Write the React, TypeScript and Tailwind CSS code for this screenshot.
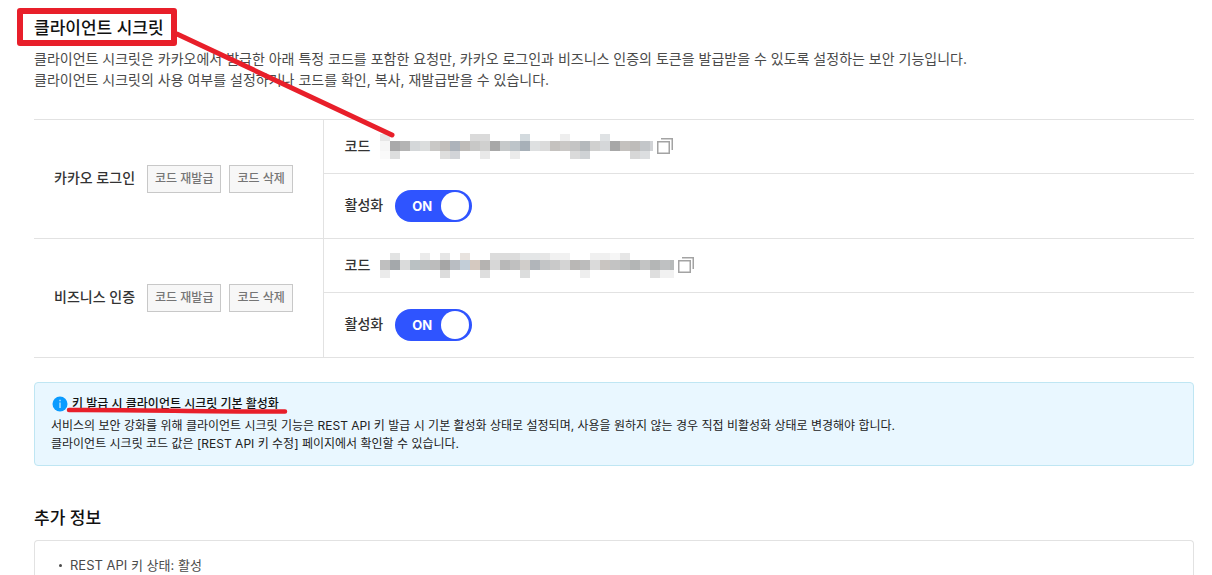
const rows = [
  {
    name: '카카오 로그인',
    width: 273,
    // [column, span, color] on a 10px grid
    upper: [[0, 1, '#e6e6e6'], [9, 2, '#dadada'], [14, 1, '#d3dade'], [18, 1, '#eeeeee'], [22, 1, '#dfe2e4']],
    middle: ['#f6f6f6', '#a9a9aa', '#b4b4b4', '#d4d7d9', '#dbdddd', '#c9c8c6', '#c2bfbc', '#adb3bb', '#bfbcb9', '#c8c8c7', '#d0d0cf', '#a8a8a8', '#c6c9ca', '#bdc4c9', '#a7b0b8', '#dee0e1', '#dbdbdb', '#c5c2bf', '#cac8c6', '#c4c4c4', '#b5b9bc', '#d0d0cf', '#d5d7d9', '#a7a7a7', '#c4c1be', '#bebcba', '#c3c6c9', '#d1d3d6'],
    lower: [[0, 1, '#fafafa'], [1, 1, '#dddede'], [6, 1, '#dededd'], [7, 1, '#d2d4d8'], [10, 1, '#e9e9e9'], [13, 1, '#ebebeb'], [19, 1, '#dadada'], [20, 1, '#cfd2d5'], [25, 1, '#d7d7d7'], [26, 1, '#dcdee0']],
  },
  {
    name: '비즈니스 인증',
    width: 294,
    upper: [[1, 1, '#e2e3e3'], [4, 1, '#ebebeb'], [6, 1, '#e6e6e6'], [8, 1, '#e8e3df'], [11, 3, '#dcdcdc'], [14, 2, '#e4e6e7'], [16, 1, '#e6e6e6'], [17, 2, '#f1f1f1'], [21, 2, '#f0f0f0'], [23, 1, '#f6f6f6'], [24, 1, '#e6e6e6']],
    middle: ['#bfbfbf', '#a4a8ab', '#dadbdb', '#bac1c3', '#bcbfc0', '#bcbcbc', '#a6a6a6', '#b9bdc2', '#c3ced8', '#d5c9c0', '#b5b3b1', '#d7d7d7', '#b8b8b8', '#c0c0c0', '#d0cdca', '#b1b5ba', '#c3c5c6', '#c9c9c9', '#d4d4d4', '#b9b7b5', '#bcbcbc', '#dadada', '#c9c5c1', '#c3c3c3', '#bcbebe', '#b3b5b5', '#c3c4c4', '#b4b6b6', '#bfc1c2', '#b7baba'],
    lower: [[0, 1, '#ebebeb'], [6, 1, '#dcdcdc'], [10, 1, '#dedede'], [14, 1, '#dcdddd'], [20, 1, '#eeeeee'], [27, 1, '#dedede'], [28, 2, '#f1f1f1']],
  },
];

type Row = (typeof rows)[number];

function MaskedCode({ row }: { row: Row }) {
  return (
    <svg width={row.width} height="26" shapeRendering="crispEdges" aria-hidden="true">
      {row.upper.map(([x, span, fill]) => (
        <rect key={x} x={Number(x) * 10} y="0" width={Number(span) * 10} height="7" fill={String(fill)} />
      ))}
      {row.middle.map((fill, i) => (
        <rect key={i} x={i * 10} y="7" width="10" height="10" fill={fill} />
      ))}
      {row.lower.map(([x, span, fill]) => (
        <rect key={x} x={Number(x) * 10} y="17" width={Number(span) * 10} height="8" fill={String(fill)} />
      ))}
    </svg>
  );
}

function CopyIcon() {
  return (
    <svg width="16" height="16" viewBox="0 0 16 16" fill="none" stroke="#a3a3a3" strokeWidth="1.5" aria-hidden="true">
      <rect x="0.75" y="3.75" width="11.5" height="11.5" />
      <path d="M4 0.75h11.25V12" />
    </svg>
  );
}

function SmallButton({ children }: { children: string }) {
  return (
    <button type="button" className="h-7 border border-[#c8c8c8] bg-[#f7f7f7] px-[7px] text-xs font-medium text-[#757575]">
      {children}
    </button>
  );
}

function SecretRows({ row }: { row: Row }) {
  return (
    <>
      <tr className="h-[54px] border-t border-[#e2e2e2]">
        <th rowSpan={2} scope="rowgroup" className="border-r border-[#e2e2e2] pl-5 text-left font-medium">
          <div className="flex items-center">
            <span className="mr-3 pb-0.5 whitespace-nowrap">{row.name}</span>
            <div className="flex gap-2">
              <SmallButton>코드 재발급</SmallButton>
              <SmallButton>코드 삭제</SmallButton>
            </div>
          </div>
        </th>
        <td className="pl-[21px]">
          <div className="flex items-center">
            <span className="mr-2.5 pb-0.5 font-medium">코드</span>
            <MaskedCode row={row} />
            <button type="button" className="ml-1 pb-0.5">
              <CopyIcon />
            </button>
          </div>
        </td>
      </tr>
      <tr className="h-[65px] border-t border-[#e2e2e2]">
        <td className="pl-[21px]">
          <label className="flex w-fit items-center">
            <span className="mr-3 pb-0.5 font-medium">활성화</span>
            <input type="checkbox" role="switch" defaultChecked className="sr-only" />
            <span className="flex h-8 w-[77px] items-center justify-between rounded-full bg-[#2f54ff] pr-[3px] pl-[17px] text-[13px] font-bold text-white">
              ON
              <span className="size-7 rounded-full bg-white" />
            </span>
          </label>
        </td>
      </tr>
    </>
  );
}

export default function App() {
  return (
    <main className="relative bg-white pt-4 pr-[18px] pl-[34px] font-[Inter,'Noto_Sans_CJK_KR',sans-serif] text-sm text-[#333]">
      <h2 className="text-[17px] leading-6 font-medium text-[#111]">클라이언트 시크릿</h2>
      <p className="mt-2 leading-[21px] text-[#4a4a4a]">
        클라이언트 시크릿은 카카오에서 발급한 아래 특정 코드를 포함한 요청만, 카카오 로그인과 비즈니스 인증의 토큰을 발급받을 수 있도록 설정하는 보안 기능입니다.
        <br />
        클라이언트 시크릿의 사용 여부를 설정하거나 코드를 확인, 복사, 재발급받을 수 있습니다.
      </p>

      <table className="mt-[29px] w-full border-collapse border-b border-[#e2e2e2]">
        <colgroup>
          <col className="w-[289px]" />
          <col />
        </colgroup>
        <tbody>
          {rows.map((row) => (
            <SecretRows key={row.name} row={row} />
          ))}
        </tbody>
      </table>

      <section className="mt-6 rounded border border-[#bfe6f3] bg-[#e9f7ff] px-4 pt-3 pb-3 text-xs leading-[18px] text-[#222]">
        <h3 className="flex items-center gap-1 pb-1 pl-px font-medium text-[#111]">
          <svg width="16" height="16" viewBox="0 0 16 16" aria-hidden="true">
            <circle cx="8" cy="8" r="7.5" fill="#0a9bff" />
            <path d="M8 6.5v5.5M8 3.8v1.4" stroke="#d8f0ff" strokeWidth="1.2" />
          </svg>
          키 발급 시 클라이언트 시크릿 기본 활성화
        </h3>
        <p>
          서비스의 보안 강화를 위해 클라이언트 시크릿 기능은 REST API 키 발급 시 기본 활성화 상태로 설정되며, 사용을 원하지 않는 경우 직접 비활성화 상태로 변경해야 합니다.
          <br />
          클라이언트 시크릿 코드 값은 [REST API 키 수정] 페이지에서 확인할 수 있습니다.
        </p>
      </section>

      <h2 className="mt-10 text-[17px] leading-6 font-medium text-[#111]">추가 정보</h2>
      <div className="mt-2.5 rounded-t border border-b-0 border-[#e2e2e2] px-6 pt-3.5">
        <ul className="text-[13px] leading-5 text-[#4a4a4a]">
          <li className="flex items-center gap-2">
            <span className="size-[3px] rounded-full bg-[#4a4a4a]" />
            REST API 키 상태: 활성
          </li>
        </ul>
      </div>

      {/* red pen marks */}
      <svg className="pointer-events-none absolute top-0 left-0" width="400" height="420" fill="none" stroke="#e81f2a" strokeLinecap="round" strokeLinejoin="round" aria-hidden="true">
        <rect x="20" y="11" width="154" height="32" strokeWidth="6" />
        <path d="M177 34L392 135" strokeWidth="5" />
        <path d="M69 410C130 409.5 220 412 285 411.500" strokeWidth="4.500" />
      </svg>
    </main>
  );
}
